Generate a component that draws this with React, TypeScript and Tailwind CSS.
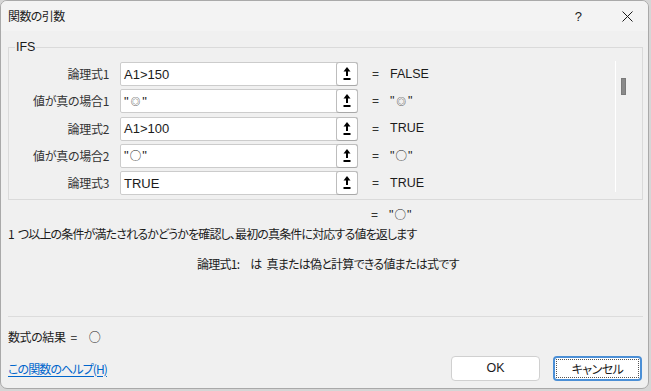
import React from "react";

const jp = "font-['Noto_Sans_CJK_JP',sans-serif] [font-feature-settings:'palt']";
const lat = "font-['Liberation_Sans','Noto_Sans_CJK_JP',sans-serif]";
const cjk = "font-['Noto_Sans_CJK_JP',sans-serif]";

function RefIcon() {
  return (
    <svg width="8" height="14" viewBox="0 0 8 14" className="block">
      <polygon points="4,0 0.5,4.5 7.5,4.5" fill="#000" />
      <rect x="3" y="4" width="2" height="5" fill="#000" />
      <rect x="0.5" y="11" width="7" height="2" fill="#000" />
    </svg>
  );
}

function Val({ v }: { v: string }) {
  if (v === "◎")
    return (
      <span className="inline-flex items-center">
        "<span className={`mx-[2px] text-[9.5px] leading-none text-[#222] ${cjk}`}>◎</span>"
      </span>
    );
  if (v === "○")
    return (
      <span className="inline-flex items-center">
        "<span className={`mx-[1px] text-[11.5px] leading-none ${cjk}`}>○</span>"
      </span>
    );
  return <>{v}</>;
}

const rows = [
  { label: "論理式1", value: "A1>150", result: "FALSE" },
  { label: "値が真の場合1", value: "◎", result: "◎" },
  { label: "論理式2", value: "A1>100", result: "TRUE" },
  { label: "値が真の場合2", value: "○", result: "○" },
  { label: "論理式3", value: "TRUE", result: "TRUE" },
];

export default function App() {
  return (
    <div className="w-[651px] h-[391px] bg-[#d6d6d6] overflow-hidden">
      <div className={`w-[649px] h-[389px] bg-[#f0f0f0] rounded-[7px] border border-[#a9a9a9] overflow-hidden text-[#1b1b1b] ${jp}`}>
        {/* title bar */}
        <div className="h-[30px] bg-[#f3f3f3] flex items-center pl-[7px]">
          <span className="text-[12px] leading-none tracking-[-0.6px]">関数の引数</span>
          <span className={`ml-auto text-[13px] leading-none ${lat}`}>?</span>
          <svg width="11" height="11" viewBox="0 0 11 11" className="ml-[40px] mr-[15px]">
            <path d="M0.5 0.5 L10.5 10.5 M10.5 0.5 L0.5 10.5" stroke="#1b1b1b" strokeWidth="1" />
          </svg>
        </div>

        {/* group box */}
        <div className="relative mt-[16px] ml-[7px] w-[635px] h-[153px] border border-[#dadada] pt-[14px] flex">
          <span className={`absolute left-[6px] top-[-8px] text-[12.5px] leading-[14px] bg-[#f0f0f0] px-px ${lat}`}>IFS</span>
          <div className="flex flex-col gap-[3.25px]">
            {rows.map((r) => (
              <div key={r.label} className="flex items-center h-[24px]">
                <div className="w-[100px] text-right text-[12px] leading-none text-[#333] tracking-[-0.3px]">{r.label}</div>
                <div className="ml-[11px] w-[238px] h-[24px] bg-white border border-[#cccccc] rounded-[2px] flex items-center">
                  <span className={`pl-[3px] text-[13px] leading-none ${lat}`}><Val v={r.value} /></span>
                  <div className="ml-auto w-[22px] h-[24px] -mr-px border border-[#bdbdbd] border-b-[#a8a8a8] rounded-[3px] bg-white flex items-center justify-center">
                    <RefIcon />
                  </div>
                </div>
                <span className={`ml-[14px] text-[12px] leading-none text-[#333] ${lat}`}>=</span>
                <span className={`ml-[11px] text-[12.5px] leading-none ${lat}`}><Val v={r.result} /></span>
              </div>
            ))}
          </div>
          <div className="ml-auto mr-[16px] -mt-px h-[131px] flex">
            <div className="w-px h-full bg-white" />
            <div className="ml-[5px] mt-[17px] w-[5px] h-[17px] bg-[#8a8a8a] border border-[#7a7a7a]" />
          </div>
        </div>

        {/* overall result */}
        <div className="mt-[8px] h-[14px] pl-[370px] flex items-center">
          <span className={`text-[12px] leading-none text-[#333] ${lat}`}>=</span>
          <span className={`ml-[11px] text-[12.5px] leading-none ${lat}`}><Val v="○" /></span>
        </div>

        <div className="mt-[5px] h-[14px] pl-[7px] flex items-center text-[12px] leading-none tracking-[-0.85px]">
          <span className="mr-[4px]">1</span>つ以上の条件が満たされるかどうかを確認し、最初の真条件に対応する値を返します
        </div>

        <div className="mt-[16px] h-[14px] pl-[196px] flex items-center text-[12px] leading-none tracking-[-0.75px]">
          <span>論理式1:</span>
          <span className="ml-[11px]">は</span>
          <span className="ml-[5px]">真または偽と計算できる値または式です</span>
        </div>

        <div className="mt-[45px] ml-[7px] w-[635px] h-px bg-[#dcdcdc]" />

        <div className="mt-[13px] h-[14px] pl-[7px] flex items-center text-[12px] leading-none tracking-[-0.4px]">
          <span>数式の結果</span>
          <span className="ml-[5px]">=</span>
          <span className={`ml-[12px] ${cjk}`}>○</span>
        </div>

        <div className="mt-[12px] flex items-center pl-[7px] pr-[6px]">
          <a className="text-[12px] leading-none text-[#0066cc] underline underline-offset-2 cursor-pointer tracking-[-0.9px]">この関数のヘルプ(H)</a>
          <button className={`ml-auto w-[89px] h-[25px] bg-white border border-[#d0d0d0] rounded-[4px] text-[12.5px] ${lat}`}>OK</button>
          <button className="ml-[13px] w-[89px] h-[25px] bg-white border-2 border-[#4b8fd6] rounded-[4px] p-[1px]">
            <div className="w-full h-full border border-dotted border-[#555] flex items-center justify-center text-[12px] leading-none tracking-[-0.5px]">キャンセル</div>
          </button>
        </div>
      </div>
    </div>
  );
}
